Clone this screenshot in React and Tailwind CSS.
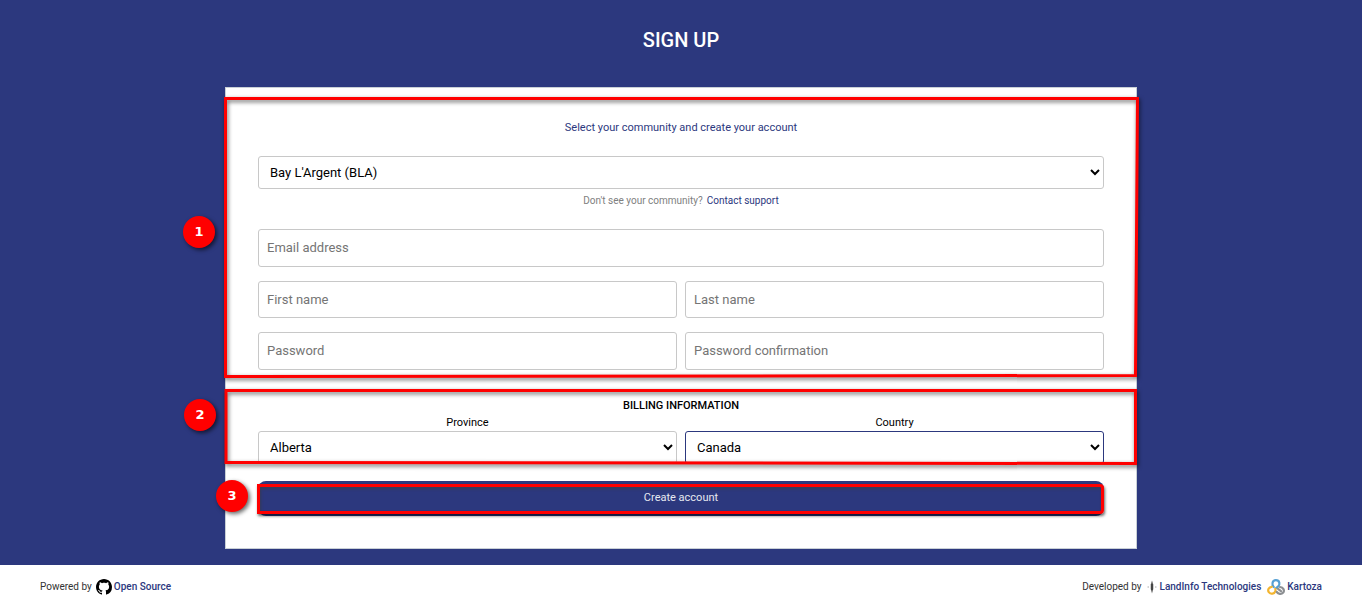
import React from "react";

const field =
  "w-full rounded-[3px] border border-[#c8c8c8] bg-white px-2 text-[13px] text-black placeholder:text-[#757575] outline-none";
const select =
  "h-[33px] w-full rounded-[3px] border bg-white px-[7px] text-[13px] text-black outline-none";

function Marker({ label, className }) {
  return (
    <span
      className={
        "absolute flex size-8 items-center justify-center rounded-full bg-[#ff0000] font-['DejaVu_Sans',sans-serif] text-[13px] font-bold text-white shadow-[2px_2px_4px_rgba(0,0,0,0.6)] " +
        className
      }
    >
      {label}
    </span>
  );
}

function Outline({ points, viewBox, className }) {
  return (
    <svg
      className={
        "pointer-events-none absolute -left-px w-[calc(100%+2px)] overflow-visible drop-shadow-[1px_2px_2px_rgba(0,0,0,0.6)] " +
        className
      }
      viewBox={viewBox}
      preserveAspectRatio="none"
      aria-hidden="true"
    >
      <polygon points={points} fill="none" stroke="#ff0000" strokeWidth="3" vectorEffect="non-scaling-stroke" />
    </svg>
  );
}

function GithubMark() {
  return (
    <svg className="size-4" viewBox="0 0 16 16" aria-hidden="true">
      <path d="M8 0C3.58 0 0 3.58 0 8c0 3.54 2.29 6.53 5.47 7.59.4.07.55-.17.55-.38 0-.19-.01-.82-.01-1.49-2.01.37-2.53-.49-2.69-.94-.09-.23-.48-.94-.82-1.13-.28-.15-.68-.52-.01-.53.63-.01 1.08.58 1.23.82.72 1.21 1.87.87 2.33.66.07-.52.28-.87.51-1.07-1.78-.2-3.64-.89-3.64-3.95 0-.87.31-1.59.82-2.15-.08-.2-.36-1.02.08-2.12 0 0 .67-.21 2.2.82.64-.18 1.32-.27 2-.27s1.36.09 2 .27c1.53-1.04 2.2-.82 2.2-.82.44 1.1.16 1.92.08 2.12.51.56.82 1.27.82 2.15 0 3.07-1.87 3.75-3.65 3.95.29.25.54.73.54 1.48 0 1.07-.01 1.93-.01 2.2 0 .21.15.46.55.38A8.01 8.01 0 0 0 16 8c0-4.42-3.58-8-8-8z" />
    </svg>
  );
}

function CompassMark() {
  return (
    <svg className="h-4 w-[10px]" viewBox="0 0 10 16" aria-hidden="true">
      <path d="M5 1.5 6.3 5.5V10L5 14.5 3.7 10V5.5z" fill="#666" />
      <path d="M5 5v6" stroke="#222" strokeWidth="1" />
      <path d="M0.5 8h1.5M8 8h1.5" stroke="#aaa" strokeWidth="1" />
    </svg>
  );
}

function KartozaMark() {
  return (
    <svg className="h-4 w-[18px]" viewBox="0 0 18 16" fill="none" strokeWidth="2.2" strokeLinecap="round" aria-hidden="true">
      <path d="M6.8 8C4.6 6 4.9 1.2 8.9 1.2C12.8 1.2 13.4 5.6 11 7.6L9 9.2" stroke="#559fd3" />
      <path d="M4.8 7.8C1.8 8 0.2 11.2 2 13.4C3.8 15.6 7.4 15 8.3 12.4C8.6 11.6 8.6 10.8 8.3 9.8" stroke="#f3b530" />
      <path d="M13 8C16.4 8.4 17.8 11.4 16.2 13.5C14.4 15.7 11.2 15 9.8 13" stroke="#8c8f92" />
      <path d="M11 9.8L14 12.2" stroke="#8c8f92" />
    </svg>
  );
}

export default function App() {
  return (
    <div className="flex min-h-screen flex-col bg-[#2c387e] font-[Roboto,sans-serif]">
      <h1 className="pt-6 text-center text-[20px] leading-8 font-medium text-white">SIGN UP</h1>

      <main className="mx-auto mt-[31px] mb-4 w-full max-w-[912px]">
        <form
          className="relative border border-[#c9d0d6] bg-white px-8 pt-8 pb-8 text-center"
          onSubmit={(e) => e.preventDefault()}
        >
          <section>
            <h2 className="text-[11px] leading-4 text-[#2c387e]">Select your community and create your account</h2>
            <select aria-label="Community" className={select + " mt-5 border-[#c8c8c8]"}>
              <option>Bay L'Argent (BLA)</option>
            </select>
            <p className="flex h-[22px] items-center justify-center gap-1 text-[10px] text-[#808080]">
              Don't see your community?
              <a href="#support" className="text-[#2c387e]">Contact support</a>
            </p>
            <div className="mt-[18px] grid grid-cols-2 gap-x-2 gap-y-[14px]">
              <input type="email" aria-label="Email address" placeholder="Email address" className={field + " col-span-2 h-[38px] pb-[2px]"} />
              <input type="text" aria-label="First name" placeholder="First name" className={field + " h-[37px]"} />
              <input type="text" aria-label="Last name" placeholder="Last name" className={field + " h-[37px]"} />
              <input type="password" aria-label="Password" placeholder="Password" className={field + " h-[38px] pb-[2px]"} />
              <input type="password" aria-label="Password confirmation" placeholder="Password confirmation" className={field + " h-[38px] pb-[2px]"} />
            </div>
          </section>

          <section className="mt-7">
            <h2 className="text-[11px] leading-4 font-medium text-black">BILLING INFORMATION</h2>
            <div className="grid grid-cols-2 gap-x-2 text-[11px] text-black">
              <div>
                <label htmlFor="province" className="block leading-[17px]">Province</label>
                <select id="province" className={select + " border-[#c8c8c8]"}>
                  <option>Alberta</option>
                </select>
              </div>
              <div>
                <label htmlFor="country" className="block leading-[17px]">Country</label>
                <select id="country" className={select + " border-[#2c387e]"}>
                  <option>Canada</option>
                </select>
              </div>
            </div>
          </section>

          <button
            type="submit"
            className="mt-[17px] block h-[35px] w-full rounded-lg bg-[#2c387e] pb-px text-[11px] text-[#e6e8f0]"
          >
            Create account
          </button>

          <Outline
            className="top-[10px] h-[280px]"
            viewBox="0 0 912 280"
            points="0.5,0.5 912.5,0.5 910.5,277.5 0.5,278.5"
          />
          <Outline
            className="top-[302px] h-[74px]"
            viewBox="0 0 912 74"
            points="1,0.5 910.5,0.5 910.5,73.5 1,72.5"
          />
          <span className="pointer-events-none absolute right-8 left-[31px] top-[396px] h-[30px] rounded-r-[4px] border-3 border-[#ff0000] shadow-[1px_2px_3px_rgba(0,0,0,0.6),inset_1px_2px_3px_rgba(60,60,60,0.6)]" />
          <Marker label="1" className="top-[128px] -left-[43px]" />
          <Marker label="2" className="top-[311px] -left-[42px]" />
          <Marker label="3" className="top-[392px] -left-[10px]" />
        </form>
      </main>

      <footer className="mt-auto flex h-[43px] items-center justify-between bg-white px-10 text-[10px] text-[#333]">
        <div className="flex items-center gap-1">
          <span>Powered by</span>
          <a href="#source" className="flex items-center gap-[2px] font-medium text-[#2c387e]">
            <GithubMark />
            Open Source
          </a>
        </div>
        <div className="flex items-center gap-[6px]">
          <span>Developed by</span>
          <a href="#landinfo" className="flex items-center gap-[2px] font-medium text-[#2c387e]">
            <CompassMark />
            LandInfo Technologies
          </a>
          <a href="#kartoza" className="flex items-center gap-[2px] font-medium text-[#2c387e]">
            <KartozaMark />
            Kartoza
          </a>
        </div>
      </footer>
    </div>
  );
}
